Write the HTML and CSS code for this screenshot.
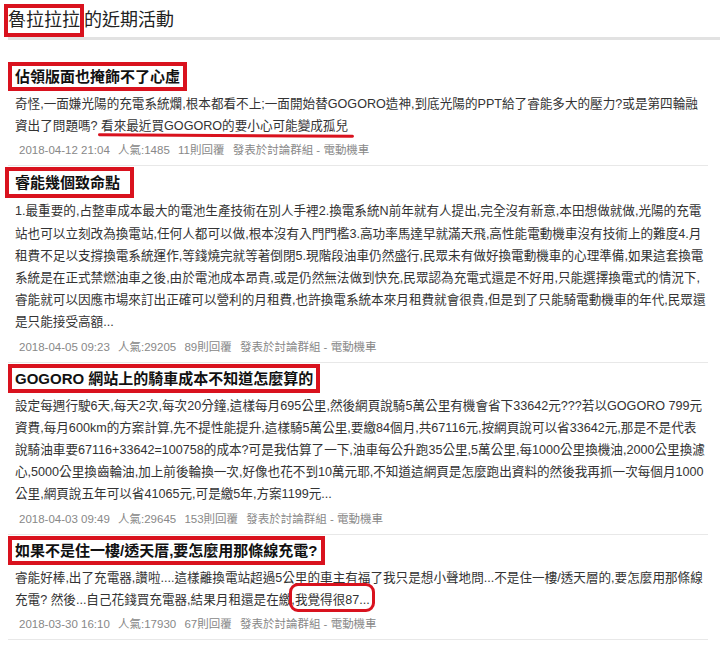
FILE: index.html
```html
<!DOCTYPE html>
<html lang="zh-Hant">
<head>
  <meta charset="UTF-8">
  <title>魯拉拉拉的近期活動</title>
  <link rel="stylesheet" href="styles.css">
</head>
<body>

<div class="feed">
  <h1 class="feed-title"><span class="box">魯拉拉拉</span>的近期活動</h1>

  <div class="post">
    <h2 class="post-title"><span class="box">佔領版面也掩飾不了心虛</span></h2>
    <p class="post-body">奇怪,一面嫌光陽的充電系統爛,根本都看不上;一面開始替GOGORO造神,到底光陽的PPT給了睿能多大的壓力?或是第四輪融<br>資出了問題嗎? <span class="scribble">看來最近買GOGORO的要小心可能變成孤兒</span></p>
    <div class="post-meta">
      <span>2018-04-12 21:04</span>
      <span>人氣:1485</span>
      <span>11則回覆</span>
      <span>發表於討論群組 - 電動機車</span>
    </div>
  </div>

  <div class="post">
    <h2 class="post-title"><span class="box wide">睿能幾個致命點</span></h2>
    <p class="post-body">1.最重要的,占整車成本最大的電池生產技術在別人手裡2.換電系統N前年就有人提出,完全沒有新意,本田想做就做,光陽的充電<br>站也可以立刻改為換電站,任何人都可以做,根本沒有入門門檻3.高功率馬達早就滿天飛,高性能電動機車沒有技術上的難度4.月<br>租費不足以支撐換電系統運作,等錢燒完就等著倒閉5.現階段油車仍然盛行,民眾未有做好換電動機車的心理準備,如果這套換電<br>系統是在正式禁燃油車之後,由於電池成本昂貴,或是仍然無法做到快充,民眾認為充電式還是不好用,只能選擇換電式的情況下,<br>睿能就可以因應市場來訂出正確可以營利的月租費,也許換電系統本來月租費就會很貴,但是到了只能騎電動機車的年代,民眾還<br>是只能接受高額...</p>
    <div class="post-meta">
      <span>2018-04-05 09:23</span>
      <span>人氣:29205</span>
      <span>89則回覆</span>
      <span>發表於討論群組 - 電動機車</span>
    </div>
  </div>

  <div class="post">
    <h2 class="post-title"><span class="box">GOGORO 網站上的騎車成本不知道怎麼算的</span></h2>
    <p class="post-body">設定每週行駛6天,每天2次,每次20分鐘,這樣每月695公里,然後網頁說騎5萬公里有機會省下33642元???若以GOGORO 799元<br>資費,每月600km的方案計算,先不提性能提升,這樣騎5萬公里,要繳84個月,共67116元,按網頁說可以省33642元,那是不是代表<br>說騎油車要67116+33642=100758的成本?可是我估算了一下,油車每公升跑35公里,5萬公里,每1000公里換機油,2000公里換濾<br>心,5000公里換齒輪油,加上前後輪換一次,好像也花不到10萬元耶,不知道這網頁是怎麼跑出資料的然後我再抓一次每個月1000<br>公里,網頁說五年可以省41065元,可是繳5年,方案1199元...</p>
    <div class="post-meta">
      <span>2018-04-03 09:49</span>
      <span>人氣:29645</span>
      <span>153則回覆</span>
      <span>發表於討論群組 - 電動機車</span>
    </div>
  </div>

  <div class="post">
    <h2 class="post-title"><span class="box">如果不是住一樓/透天厝,要怎麼用那條線充電?</span></h2>
    <p class="post-body">睿能好棒,出了充電器,讚啦....這樣離換電站超過5公里的車主有福了我只是想小聲地問...不是住一樓/透天層的,要怎麼用那條線<br>充電? 然後...自己花錢買充電器,結果月租還是在繳,<span class="circled">我覺得很87...</span></p>
    <div class="post-meta">
      <span>2018-03-30 16:10</span>
      <span>人氣:17930</span>
      <span>67則回覆</span>
      <span>發表於討論群組 - 電動機車</span>
    </div>
  </div>
</div>

</body>
</html>
```

FILE: styles.css
```css
body {
  margin: 0;
  background: #fff;
  color: #333;
  font-family: "Liberation Sans", "Noto Sans CJK TC", sans-serif;
}

.feed {
  padding: 0 12px 0 8px;
}

.box {
  display: inline-block;
  border: 4px solid #d9121e;
}

.feed-title {
  margin: 0 -12px 21px 0;
  padding-top: 4px;
  font-size: 18px;
  font-weight: normal;
  line-height: 25px;
  color: #222;
  border-bottom: 3px solid #e2e2e2;
}

.feed-title .box {
  margin-left: -4px;
}

.post {
  padding: 1px 0 4px;
  border-bottom: 1px solid #e8e8e8;
}

.post-title {
  margin: 0;
  font-size: 15px;
  line-height: 21px;
  color: #111;
}

.post-title .box {
  padding: 0 3px;
}

.post-title .wide {
  margin-left: -3px;
  padding: 1px 10px 1px 6px;
}

.post-body {
  margin: 2px 0 0;
  padding-left: 7px;
  font-size: 12.6px;
  line-height: 22.2px;
}

.post-meta {
  margin-top: 2px;
  padding-left: 11px;
  font-size: 11.5px;
  line-height: 22px;
  color: #888;
}

.post-meta span {
  margin-right: 5px;
}

.scribble {
  position: relative;
}

.scribble::after {
  content: "";
  position: absolute;
  left: -3px;
  right: -6px;
  bottom: -4px;
  height: 3px;
  border-radius: 2px;
  background: #d9121e;
  transform: rotate(0.3deg);
}

.circled {
  position: relative;
}

.circled::after {
  content: "";
  position: absolute;
  top: -10px;
  bottom: -5px;
  left: -6px;
  right: -5px;
  border: 3px solid #d9121e;
  border-radius: 9px;
}
```
